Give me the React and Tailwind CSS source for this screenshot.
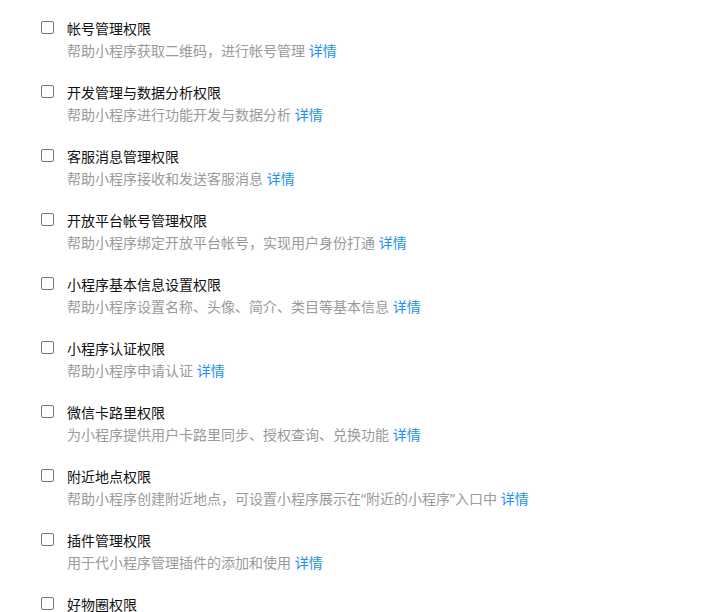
import React from "react";

const items = [
  { title: "帐号管理权限", desc: "帮助小程序获取二维码，进行帐号管理" },
  { title: "开发管理与数据分析权限", desc: "帮助小程序进行功能开发与数据分析" },
  { title: "客服消息管理权限", desc: "帮助小程序接收和发送客服消息" },
  { title: "开放平台帐号管理权限", desc: "帮助小程序绑定开放平台帐号，实现用户身份打通" },
  { title: "小程序基本信息设置权限", desc: "帮助小程序设置名称、头像、简介、类目等基本信息" },
  { title: "小程序认证权限", desc: "帮助小程序申请认证" },
  { title: "微信卡路里权限", desc: "为小程序提供用户卡路里同步、授权查询、兑换功能" },
  { title: "附近地点权限", desc: "帮助小程序创建附近地点，可设置小程序展示在“附近的小程序”入口中" },
  { title: "插件管理权限", desc: "用于代小程序管理插件的添加和使用" },
  { title: "好物圈权限", desc: "" },
];

export default function App() {
  return (
    <div
      className="w-[706px] h-[612px] overflow-hidden bg-white pt-[18px] pl-[41px]"
      style={{ fontFamily: '"Noto Sans", "Noto Sans CJK SC", sans-serif' }}
    >
      {items.map((item) => (
        <div key={item.title} className="flex h-[64px]">
          <span className="mt-[3px] w-[13px] h-[13px] shrink-0 rounded-[2px] border border-[#767676] bg-white" />
          <div className="ml-[13px]">
            <div className="text-[14px] leading-[21px] text-[#111]">{item.title}</div>
            {item.desc && (
              <div className="mt-[1px] text-[14px] leading-[21px] text-[#9a9a9a]">
                {item.desc} <a className="text-[#1890ff]">详情</a>
              </div>
            )}
          </div>
        </div>
      ))}
    </div>
  );
}
